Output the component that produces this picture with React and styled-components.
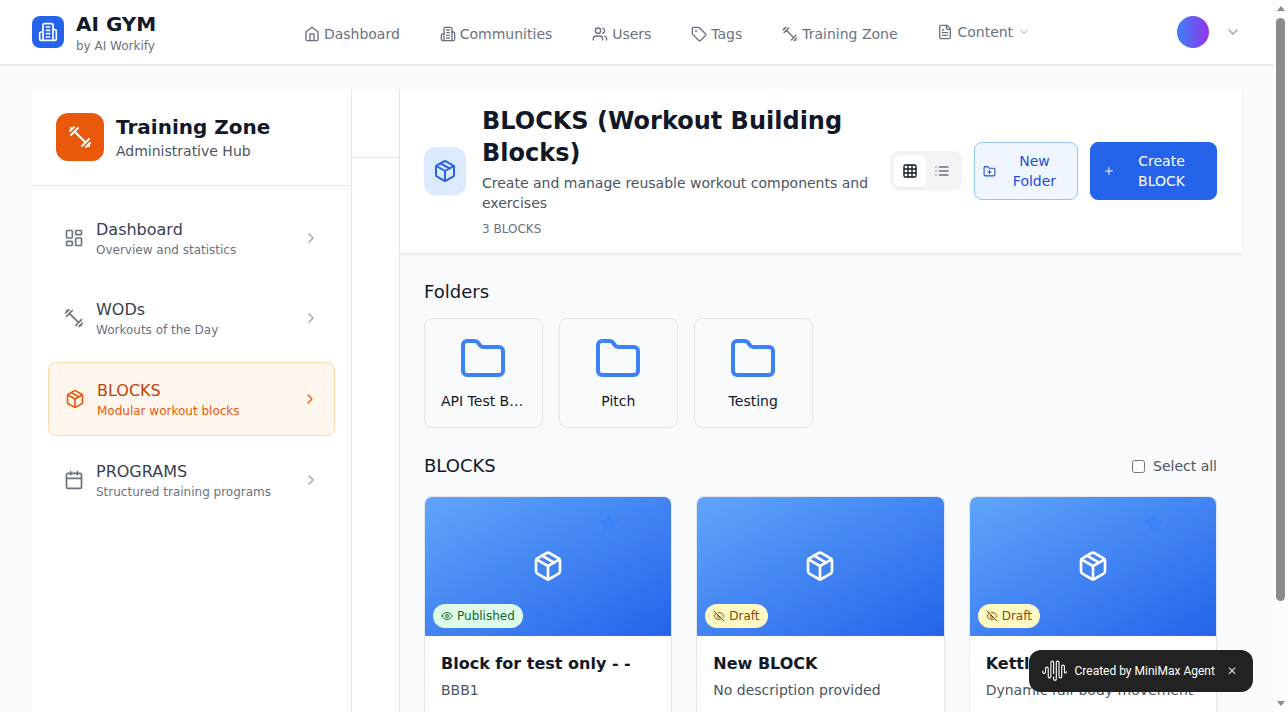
import React from "react";
import styled, { createGlobalStyle, css } from "styled-components";

const GlobalStyle = createGlobalStyle`
  *, *::before, *::after { box-sizing: border-box; }
  html, body { margin: 0; padding: 0; height: 100%; overflow: hidden; }
  body {
    background: #f9fafb;
    color: #111827;
    font-family: "DejaVu Sans", sans-serif;
    font-size: 16px;
    line-height: 24px;
  }
  h1, h2, h3, p { margin: 0; font-weight: 400; }
  button { font: inherit; margin: 0; border: 0; padding: 0; background: none; cursor: pointer; }
  svg { display: block; flex-shrink: 0; }
`;

/* ---------- icons ---------- */

const shapes = {
  building: (
    <>
      <path d="M6 22V4a2 2 0 0 1 2-2h8a2 2 0 0 1 2 2v18Z" />
      <path d="M6 12H4a2 2 0 0 0-2 2v6a2 2 0 0 0 2 2h2" />
      <path d="M18 9h2a2 2 0 0 1 2 2v9a2 2 0 0 1-2 2h-2" />
      <path d="M10 6h4M10 10h4M10 14h4M10 18h4" />
    </>
  ),
  home: (
    <>
      <path d="m3 9 9-7 9 7v11a2 2 0 0 1-2 2H5a2 2 0 0 1-2-2z" />
      <path d="M9 22V12h6v10" />
    </>
  ),
  users: (
    <>
      <path d="M16 21v-2a4 4 0 0 0-4-4H6a4 4 0 0 0-4 4v2" />
      <circle cx="9" cy="7" r="4" />
      <path d="M22 21v-2a4 4 0 0 0-3-3.87M16 3.13a4 4 0 0 1 0 7.75" />
    </>
  ),
  tag: (
    <>
      <path d="M12.586 2.586A2 2 0 0 0 11.172 2H4a2 2 0 0 0-2 2v7.172a2 2 0 0 0 .586 1.414l8.704 8.704a2.426 2.426 0 0 0 3.42 0l6.58-6.58a2.426 2.426 0 0 0 0-3.42z" />
      <circle cx="7.5" cy="7.5" r=".5" fill="currentColor" />
    </>
  ),
  dumbbell: <path d="m6.5 6.5 11 11M21 21l-1-1M3 3l1 1M18 22l4-4M2 6l4-4M3 10l7-7M14 21l7-7" />,
  file: (
    <>
      <path d="M15 2H6a2 2 0 0 0-2 2v16a2 2 0 0 0 2 2h12a2 2 0 0 0 2-2V7Z" />
      <path d="M14 2v4a2 2 0 0 0 2 2h4M10 9H8M16 13H8M16 17H8" />
    </>
  ),
  down: <path d="m6 9 6 6 6-6" />,
  right: <path d="m9 18 6-6-6-6" />,
  dashboard: (
    <>
      <rect width="7" height="9" x="3" y="3" rx="1" />
      <rect width="7" height="5" x="14" y="3" rx="1" />
      <rect width="7" height="9" x="14" y="12" rx="1" />
      <rect width="7" height="5" x="3" y="16" rx="1" />
    </>
  ),
  box: (
    <>
      <path d="m7.5 4.27 9 5.15" />
      <path d="M21 8a2 2 0 0 0-1-1.73l-7-4a2 2 0 0 0-2 0l-7 4A2 2 0 0 0 3 8v8a2 2 0 0 0 1 1.73l7 4a2 2 0 0 0 2 0l7-4A2 2 0 0 0 21 16Z" />
      <path d="m3.3 7 8.7 5 8.7-5M12 22V12" />
    </>
  ),
  calendar: (
    <>
      <path d="M8 2v4M16 2v4M3 10h18" />
      <rect width="18" height="18" x="3" y="4" rx="2" />
    </>
  ),
  grid: (
    <>
      <rect width="18" height="18" x="3" y="3" rx="2" />
      <path d="M3 9h18M3 15h18M9 3v18M15 3v18" />
    </>
  ),
  list: <path d="M8 6h13M8 12h13M8 18h13M3 6h.01M3 12h.01M3 18h.01" />,
  folder: (
    <path d="M20 20a2 2 0 0 0 2-2V8a2 2 0 0 0-2-2h-7.9a2 2 0 0 1-1.69-.9L9.6 3.9A2 2 0 0 0 7.93 3H4a2 2 0 0 0-2 2v13a2 2 0 0 0 2 2Z" />
  ),
  folderPlus: (
    <>
      <path d="M12 10v6M9 13h6" />
      <path d="M20 20a2 2 0 0 0 2-2V8a2 2 0 0 0-2-2h-7.9a2 2 0 0 1-1.69-.9L9.6 3.9A2 2 0 0 0 7.93 3H4a2 2 0 0 0-2 2v13a2 2 0 0 0 2 2Z" />
    </>
  ),
  plus: <path d="M5 12h14M12 5v14" />,
  star: (
    <path
      fill="currentColor"
      d="m12 2 3.09 6.26L22 9.27l-5 4.87 1.18 6.88L12 17.77l-6.18 3.25L7 14.14 2 9.27l6.91-1.01z"
    />
  ),
  eye: (
    <>
      <path d="M2 12s3-7 10-7 10 7 10 7-3 7-10 7-10-7-10-7Z" />
      <circle cx="12" cy="12" r="3" />
    </>
  ),
  eyeOff: (
    <>
      <path d="M9.88 9.88a3 3 0 1 0 4.24 4.24" />
      <path d="M10.73 5.08A10.43 10.43 0 0 1 12 5c7 0 10 7 10 7a13.16 13.16 0 0 1-1.67 2.68" />
      <path d="M6.61 6.61A13.526 13.526 0 0 0 2 12s3 7 10 7a9.74 9.74 0 0 0 5.39-1.61M2 2l20 20" />
    </>
  ),
};

const Icon = ({ name, size = 16 }) => (
  <svg
    width={size}
    height={size}
    viewBox="0 0 24 24"
    fill="none"
    stroke="currentColor"
    strokeWidth="2"
    strokeLinecap="round"
    strokeLinejoin="round"
    aria-hidden="true"
  >
    {shapes[name]}
  </svg>
);

/* ---------- shell ---------- */

const Window = styled.div`
  display: flex;
  height: 100vh;
  overflow: hidden;
`;

const Page = styled.div`
  flex: 1;
  min-width: 0;
  display: flex;
  flex-direction: column;
`;

const ScrollTrack = styled.div`
  width: 15px;
  flex-shrink: 0;
  padding: 6px 3px;
  display: flex;
  flex-direction: column;
  align-items: center;
  justify-content: space-between;
  background: #fcfcfc;
`;

const ScrollArrow = styled.span`
  border: 0 solid transparent;
  border-width: 0 4.5px;
  ${(p) =>
    p.$down
      ? css`border-top: 5px solid #8b8b8b;`
      : css`border-bottom: 5px solid #8b8b8b;`}
`;

const ScrollThumb = styled.div`
  width: 9px;
  height: 583px;
  margin: 7px 0 auto;
  border-radius: 5px;
  background: #8b8b8b;
`;

/* ---------- top bar ---------- */

const TopBar = styled.header`
  height: 65px;
  flex-shrink: 0;
  padding: 0 32px;
  display: flex;
  justify-content: space-between;
  background: #fff;
  border-bottom: 1px solid #e5e7eb;
  box-shadow: 0 1px 2px rgba(0, 0, 0, 0.05);
`;

const Brand = styled.div`
  width: 271.9px;
  display: flex;
  align-items: center;
  gap: 12px;
`;

const BrandMark = styled.span`
  width: 32px;
  height: 32px;
  display: grid;
  place-items: center;
  border-radius: 8px;
  background: #2563eb;
  color: #fff;
`;

const BrandName = styled.h1`
  font-size: 20px;
  line-height: 28px;
  font-weight: 700;
`;

const BrandNote = styled.p`
  font-size: 12px;
  line-height: 16px;
  color: #6b7280;
`;

const TopNav = styled.nav`
  flex: 1;
  display: flex;
  align-items: center;
  gap: 39.9px;
`;

const TopLink = styled.a`
  display: flex;
  align-items: center;
  gap: 4px;
  padding-top: ${(p) => (p.$menu ? 0 : 4)}px;
  font-size: 14px;
  line-height: 20px;
  color: #6b7280;
`;

const Muted = styled.span`
  display: flex;
  margin-left: 0.4px;
  color: #9ca3af;
`;

const Account = styled.div`
  display: flex;
  align-items: center;
  gap: 16px;
  color: #9ca3af;
`;

const Avatar = styled.span`
  width: 32px;
  height: 32px;
  border-radius: 50%;
  background: linear-gradient(to right, #3b82f6, #9333ea);
`;

/* ---------- side columns ---------- */

const Workspace = styled.div`
  flex: 1;
  min-height: 0;
  padding: 24px 32px 0;
  display: flex;
`;

const Sidebar = styled.aside`
  width: 320px;
  flex-shrink: 0;
  background: #fff;
  border-right: 1px solid #e5e7eb;
`;

const SidebarHead = styled.div`
  padding: 24px;
  display: flex;
  align-items: center;
  gap: 12px;
  border-bottom: 1px solid #e5e7eb;
`;

const ZoneMark = styled.span`
  width: 48px;
  height: 48px;
  display: grid;
  place-items: center;
  border-radius: 12px;
  background: #ea580c;
  color: #fff;
`;

const ZoneTitle = styled.h2`
  font-size: 20px;
  line-height: 28px;
  font-weight: 700;
`;

const ZoneNote = styled.p`
  font-size: 14px;
  line-height: 20px;
  color: #4b5563;
`;

const SideNav = styled.nav`
  padding: 16px;
  display: flex;
  flex-direction: column;
  gap: 8px;
`;

const SideItem = styled.a`
  padding: 16px;
  display: flex;
  align-items: center;
  gap: 12px;
  border-radius: 8px;
  color: ${(p) => (p.$active ? "#ea580c" : "#6b7280")};
  ${(p) =>
    p.$active &&
    css`
      background: #fff7ed;
      border: 1px solid #fed7aa;
    `}
`;

const SideText = styled.div`
  flex: 1;
`;

const SideLabel = styled.p`
  color: ${(p) => (p.$active ? "#c2410c" : "#374151")};
`;

const SideNote = styled.p`
  font-size: 12px;
  line-height: 16px;
`;

const SideArrow = styled.span`
  color: ${(p) => (p.$active ? "#ea580c" : "#9ca3af")};
`;

const Rail = styled.aside`
  width: 48px;
  flex-shrink: 0;
  background: #fff;
  border-right: 1px solid #e5e7eb;
`;

const RailHead = styled.div`
  height: 69px;
  border-bottom: 1px solid #e5e7eb;
`;

/* ---------- main ---------- */

const Main = styled.main`
  flex: 1;
  min-width: 0;
`;

const MainHead = styled.div`
  padding: 16px 24px;
  display: flex;
  align-items: center;
  background: #fff;
  border-bottom: 1px solid #e5e7eb;
  box-shadow: 0 1px 2px rgba(0, 0, 0, 0.05);
`;

const MainMark = styled.span`
  width: 42px;
  height: 48px;
  flex-shrink: 0;
  display: grid;
  place-items: center;
  border-radius: 12px;
  background: #dbeafe;
  color: #2563eb;
  box-shadow: 0 1px 2px rgba(0, 0, 0, 0.05);
`;

const MainIntro = styled.div`
  width: 392px;
  margin: 0 16px;
`;

const MainTitle = styled.h1`
  font-size: 24px;
  line-height: 32px;
  font-weight: 700;
`;

const MainNote = styled.p`
  margin-top: 4px;
  font-size: 14px;
  line-height: 20px;
  color: #4b5563;
`;

const MainCount = styled.p`
  margin-top: 8px;
  font-size: 12px;
  line-height: 16px;
  color: #6b7280;
`;

const Actions = styled.div`
  display: flex;
  align-items: center;
  gap: 12px;
`;

const ViewToggle = styled.div`
  padding: 4px;
  display: flex;
  border-radius: 8px;
  background: #f3f4f6;
`;

const ViewButton = styled.button`
  width: 32px;
  height: 32px;
  display: grid;
  place-items: center;
  border-radius: 6px;
  color: #6b7280;
  ${(p) =>
    p.$on &&
    css`
      background: #fff;
      color: #111827;
      box-shadow: 0 1px 2px rgba(0, 0, 0, 0.05);
    `}
`;

const ActionButton = styled.button`
  width: ${(p) => (p.$primary ? 127 : 104)}px;
  height: 58px;
  padding: ${(p) => (p.$primary ? "0 23px 0 12px" : "0 8px")};
  display: flex;
  align-items: center;
  border-radius: 8px;
  border: 1px solid ${(p) => (p.$primary ? "#2563eb" : "#93c5fd")};
  background: ${(p) => (p.$primary ? "#2563eb" : "#eff6ff")};
  color: ${(p) => (p.$primary ? "#fff" : "#1d4ed8")};
  font-size: 14px;
  line-height: 20px;
`;

const ActionLabel = styled.span`
  flex: 1;
  padding-left: ${(p) => (p.$primary ? 15 : 4)}px;
  text-align: center;
`;

const Content = styled.div`
  padding: 24px;
`;

const SectionTitle = styled.h2`
  font-size: 18px;
  line-height: 28px;
`;

const FolderRow = styled.div`
  margin: 12px 0 24px;
  display: flex;
  gap: 16px;
`;

const FolderCard = styled.div`
  width: 118.9px;
  height: 110px;
  padding: 16px;
  display: flex;
  flex-direction: column;
  align-items: center;
  gap: 8px;
  border: 1px solid #e5e7eb;
  border-radius: 8px;
  color: #3b82f6;
`;

const FolderName = styled.p`
  width: 100%;
  overflow: hidden;
  text-overflow: ellipsis;
  white-space: nowrap;
  text-align: center;
  font-size: 14px;
  line-height: 20px;
  color: #111827;
`;

const SectionHead = styled.div`
  margin-bottom: 16px;
  display: flex;
  align-items: center;
  justify-content: space-between;
`;

const SelectAll = styled.label`
  display: flex;
  align-items: center;
  gap: 8px;
  font-size: 14px;
  line-height: 20px;
  color: #4b5563;
  input { width: 13px; height: 13px; margin: 0; }
`;

const CardGrid = styled.div`
  display: grid;
  grid-template-columns: repeat(3, minmax(0, 1fr));
  gap: 24px;
`;

const Card = styled.article`
  overflow: hidden;
  background: #fff;
  border: 1px solid #e5e7eb;
  border-radius: 8px;
`;

const Cover = styled.div`
  position: relative;
  aspect-ratio: 16 / 9;
  display: grid;
  place-items: center;
  background: linear-gradient(to bottom right, #60a5fa, #2563eb);
  color: #fff;
`;

const StarMark = styled.span`
  position: absolute;
  top: 16px;
  right: 52px;
  color: #3b82f6;
`;

const Badge = styled.span`
  position: absolute;
  left: 8px;
  bottom: 8px;
  padding: 4px 8px;
  display: flex;
  align-items: center;
  gap: 4px;
  border-radius: 12px;
  font-size: 12px;
  line-height: 16px;
  background: ${(p) => (p.$live ? "#dcfce7" : "#fef9c3")};
  color: ${(p) => (p.$live ? "#166534" : "#854d0e")};
`;

const CardBody = styled.div`
  padding: 16px;
`;

const CardTitle = styled.h3`
  font-size: 16px;
  line-height: 24px;
  font-weight: 700;
  white-space: nowrap;
`;

const CardNote = styled.p`
  margin-top: 4px;
  height: 40px;
  font-size: 14px;
  line-height: 20px;
  color: #4b5563;
`;

/* ---------- toast ---------- */

const Toast = styled.div`
  position: fixed;
  right: 35px;
  bottom: 20px;
  width: 224px;
  height: 42px;
  padding: 0 16px 0 13px;
  display: flex;
  align-items: center;
  border-radius: 12px;
  background: #222;
  color: #fff;
  font-family: Roboto, sans-serif;
  font-size: 12px;
  font-weight: 400;
  line-height: 16px;
`;

const ToastText = styled.span`
  flex: 1;
  margin-left: 7.5px;
  white-space: nowrap;
`;

const ToastClose = styled.button`
  width: 10px;
  color: #ccc;
`;

const navLinks = [
  ["home", "Dashboard"],
  ["building", "Communities"],
  ["users", "Users"],
  ["tag", "Tags"],
  ["dumbbell", "Training Zone"],
];

const sideLinks = [
  ["dashboard", "Dashboard", "Overview and statistics"],
  ["dumbbell", "WODs", "Workouts of the Day"],
  ["box", "BLOCKS", "Modular workout blocks"],
  ["calendar", "PROGRAMS", "Structured training programs"],
];

const folders = ["API Test Blocks", "Pitch", "Testing"];

const blocks = [
  { title: "Block for test only - -", note: "BBB1", live: true, star: true },
  { title: "New BLOCK", note: "No description provided" },
  { title: "Kettlebell Flow", note: "Dynamic full-body movement", star: true },
];

export default function App() {
  return (
    <Window>
      <GlobalStyle />
      <Page>
        <TopBar>
          <Brand>
            <BrandMark><Icon name="building" size={20} /></BrandMark>
            <div>
              <BrandName>AI GYM</BrandName>
              <BrandNote>by AI Workify</BrandNote>
            </div>
          </Brand>
          <TopNav>
            {navLinks.map(([icon, label]) => (
              <TopLink key={label}><Icon name={icon} />{label}</TopLink>
            ))}
            <TopLink $menu>
              <Icon name="file" />Content
              <Muted><Icon name="down" size={12} /></Muted>
            </TopLink>
          </TopNav>
          <Account><Avatar /><Icon name="down" /></Account>
        </TopBar>

        <Workspace>
          <Sidebar>
            <SidebarHead>
              <ZoneMark><Icon name="dumbbell" size={24} /></ZoneMark>
              <div>
                <ZoneTitle>Training Zone</ZoneTitle>
                <ZoneNote>Administrative Hub</ZoneNote>
              </div>
            </SidebarHead>
            <SideNav>
              {sideLinks.map(([icon, label, note]) => {
                const active = label === "BLOCKS";
                return (
                  <SideItem key={label} $active={active}>
                    <Icon name={icon} size={20} />
                    <SideText>
                      <SideLabel $active={active}>{label}</SideLabel>
                      <SideNote>{note}</SideNote>
                    </SideText>
                    <SideArrow $active={active}><Icon name="right" /></SideArrow>
                  </SideItem>
                );
              })}
            </SideNav>
          </Sidebar>

          <Rail><RailHead /></Rail>

          <Main>
            <MainHead>
              <MainMark><Icon name="box" size={24} /></MainMark>
              <MainIntro>
                <MainTitle>BLOCKS (Workout Building Blocks)</MainTitle>
                <MainNote>Create and manage reusable workout components and exercises</MainNote>
                <MainCount>3 BLOCKS</MainCount>
              </MainIntro>
              <Actions>
                <ViewToggle>
                  <ViewButton $on aria-label="Grid"><Icon name="grid" /></ViewButton>
                  <ViewButton aria-label="List"><Icon name="list" /></ViewButton>
                </ViewToggle>
                <ActionButton>
                  <Icon name="folderPlus" size={13} />
                  <ActionLabel>New<br />Folder</ActionLabel>
                </ActionButton>
                <ActionButton $primary>
                  <Icon name="plus" size={12} />
                  <ActionLabel $primary>Create<br />BLOCK</ActionLabel>
                </ActionButton>
              </Actions>
            </MainHead>

            <Content>
              <SectionTitle>Folders</SectionTitle>
              <FolderRow>
                {folders.map((name) => (
                  <FolderCard key={name}>
                    <Icon name="folder" size={48} />
                    <FolderName>{name}</FolderName>
                  </FolderCard>
                ))}
              </FolderRow>
              <SectionHead>
                <SectionTitle>BLOCKS</SectionTitle>
                <SelectAll><input type="checkbox" />Select all</SelectAll>
              </SectionHead>
              <CardGrid>
                {blocks.map((b) => (
                  <Card key={b.title}>
                    <Cover>
                      <Icon name="box" size={32} />
                      {b.star && <StarMark><Icon name="star" size={20} /></StarMark>}
                      <Badge $live={b.live}>
                        <Icon name={b.live ? "eye" : "eyeOff"} size={12} />
                        {b.live ? "Published" : "Draft"}
                      </Badge>
                    </Cover>
                    <CardBody>
                      <CardTitle>{b.title}</CardTitle>
                      <CardNote>{b.note}</CardNote>
                    </CardBody>
                  </Card>
                ))}
              </CardGrid>
            </Content>
          </Main>
        </Workspace>
      </Page>

      <ScrollTrack>
        <ScrollArrow />
        <ScrollThumb />
        <ScrollArrow $down />
      </ScrollTrack>

      <Toast>
        <svg width="25" height="22" viewBox="0 0 25 22" fill="none" stroke="#fff" strokeWidth="1.1" strokeLinecap="round">
          <path d="M.8 11v1a1.35 1.35 0 0 0 2.7 0V8.5a1.35 1.35 0 0 1 2.7 0v8a1.35 1.35 0 0 0 2.7 0V2.5a1.35 1.35 0 0 1 2.7 0v11M11.6 17v2a1.35 1.35 0 0 0 2.7 0V2.5a1.35 1.35 0 0 1 2.7 0v14a1.35 1.35 0 0 0 2.7 0V6.5a1.35 1.35 0 0 1 2.7 0v6a1 1 0 0 0 1.8 0v-1" />
        </svg>
        <ToastText>Created by MiniMax Agent</ToastText>
        <ToastClose aria-label="Close">✕</ToastClose>
      </Toast>
    </Window>
  );
}
